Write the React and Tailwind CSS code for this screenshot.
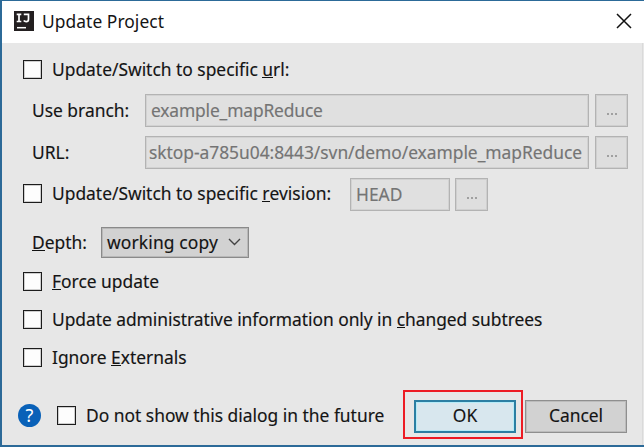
import React from 'react';

function Box() {
  return <span className="block h-[19px] w-[19px] shrink-0 border border-[#1c1c1c] bg-[#fdfdfd] shadow-[inset_0_0_0_1px_#cfcfcf]" />;
}

function Key({ children }) {
  return <span className="relative after:absolute after:inset-x-0 after:bottom-[3px] after:h-px after:bg-[#111] after:content-['']">{children}</span>;
}

function CheckRow({ children, className = '' }) {
  return (
    <div className={`flex h-[19px] items-center gap-[10px] whitespace-nowrap ${className}`}>
      <Box />
      <span className="pb-[1px]">{children}</span>
    </div>
  );
}

function More() {
  return (
    <button className="flex h-[33px] w-[33px] shrink-0 items-center justify-center border border-[#b3b3b3] bg-[#dedede] pt-[7px] shadow-[inset_0_0_0_1px_#cfcfcf]">
      <span className="flex gap-[2px]">
        <i className="h-[2px] w-[2px] bg-[#a0a0a0]" />
        <i className="h-[2px] w-[2px] bg-[#a0a0a0]" />
        <i className="h-[2px] w-[2px] bg-[#a0a0a0]" />
      </span>
    </button>
  );
}

function Field({ children, className }) {
  return (
    <div className={`flex h-[33px] shrink-0 items-center border border-[#b3b3b3] bg-[#e0e0e0] pb-[1px] whitespace-nowrap text-[#747474] shadow-[inset_0_0_0_1px_#d2d2d2] ${className}`}>
      {children}
    </div>
  );
}

export default function App() {
  return (
    <div className="flex h-[447px] w-[644px] flex-col overflow-hidden border-t border-b-2 border-l-2 border-[#2c6a98] bg-[#e7e7e7] font-['Noto_Sans',sans-serif] text-[17.4px] leading-[19px] text-[#141414] [-webkit-text-stroke:0.15px]">
      <header className="flex h-[42px] shrink-0 items-center bg-white pr-[12px] pl-[12px]">
        <svg width="20" height="20" viewBox="0 0 20 20" className="mb-[2px] shrink-0">
          <rect width="20" height="20" fill="#231f20" />
          <path d="M2.7 3.3h4.6M5 3.3v7.2M2.7 10.5h4.6M9.8 3.3h4.7v4.9c0 1.7-.8 2.4-2.3 2.4-1.1 0-1.9-.4-2.5-1.1" fill="none" stroke="#fff" strokeWidth="1.7" />
          <path d="M3 16.7h9" stroke="#fff" strokeWidth="1.5" />
        </svg>
        <h1 className="ml-[8px] grow pb-[2px] tracking-[0.05px] whitespace-nowrap [-webkit-text-stroke:0]">Update Project</h1>
        <svg width="16" height="16" viewBox="0 0 16 16" fill="none" stroke="#111" strokeWidth="1.5" className="mb-[3px]">
          <path d="M1 1l14 14M15 1L1 15" />
        </svg>
      </header>
      <main className="mr-px flex grow flex-col border-r border-[#dadada] pl-[21px]">
        <CheckRow className="mt-[17px]">Update/Switch to specific <Key>u</Key>rl:</CheckRow>
        <div className="mt-[15px] flex h-[33px] items-center pl-[9px]">
          <label className="w-[113px] pb-[1px] whitespace-nowrap">Use branch:</label>
          <Field className="w-[444px] pl-[5px] tracking-[-0.15px]">example_mapReduce</Field>
          <div className="ml-[6px]"><More /></div>
        </div>
        <div className="mt-[9px] flex h-[33px] items-center pl-[9px]">
          <label className="w-[113px] pb-[1px]">URL:</label>
          <Field className="w-[444px] pl-[3px] tracking-[-0.03px]">sktop-a785u04:8443/svn/demo/example_mapReduce</Field>
          <div className="ml-[6px]"><More /></div>
        </div>
        <div className="mt-[9px] flex h-[33px] items-center">
          <div className="w-[327px] pb-[2px]"><CheckRow>Update/Switch to specific <Key>r</Key>evision:</CheckRow></div>
          <Field className="w-[100px] pl-[5px]">HEAD</Field>
          <div className="ml-[5px]"><More /></div>
        </div>
        <div className="mt-[16px] flex h-[31px] items-center pl-[9px]">
          <label className="w-[69px] pb-[1px]"><Key>D</Key>epth:</label>
          <button className="flex h-[31px] w-[148px] items-center justify-between border border-[#8a8a8a] bg-[#d2d2d2] pr-[7px] pl-[5px] whitespace-nowrap shadow-[inset_0_0_0_1px_#b8b8b8]">
            <span className="tracking-[0.15px]">working copy</span>
            <svg width="13" height="8" viewBox="0 0 13 8" fill="none" stroke="#444" strokeWidth="1.4" className="mb-[2px]"><path d="M1 1l5.5 5.5L12 1" /></svg>
          </button>
        </div>
        <CheckRow className="mt-[14px]"><Key>F</Key>orce update</CheckRow>
        <CheckRow className="mt-[19px] tracking-[-0.04px]">Update administrative information only in <Key>c</Key>hanged subtrees</CheckRow>
        <CheckRow className="mt-[19px]">Ignore <Key>E</Key>xternals</CheckRow>
        <footer className="-ml-[5px] mt-[23px] flex h-[49px] shrink-0 items-center">
          <div className="mt-[2px] flex h-[23px] w-[23px] shrink-0 items-center justify-center rounded-full bg-[#0961b8] text-[18px] text-white [-webkit-text-stroke:0]">?</div>
          <CheckRow className="mt-[2px] ml-[16px] w-[346px] shrink-0">Do not show this dialog in the future</CheckRow>
          <div className="flex h-[49px] w-[120px] shrink-0 items-start border-2 border-[#ed1c24] pt-[8px] pl-[9px]">
            <button className="h-[33px] w-[102px] shrink-0 border-2 border-[#2c7fa3] bg-[#d8e7ee] pb-[3px] shadow-[inset_0_0_0_1px_#b5ecf8]">OK</button>
          </div>
          <button className="mt-[4px] ml-[2px] h-[33px] w-[102px] shrink-0 border border-[#8f8f8f] bg-[#d2d2d2] pb-[3px] shadow-[inset_0_0_0_1px_#bcbcbc]">Cancel</button>
        </footer>
      </main>
    </div>
  );
}
